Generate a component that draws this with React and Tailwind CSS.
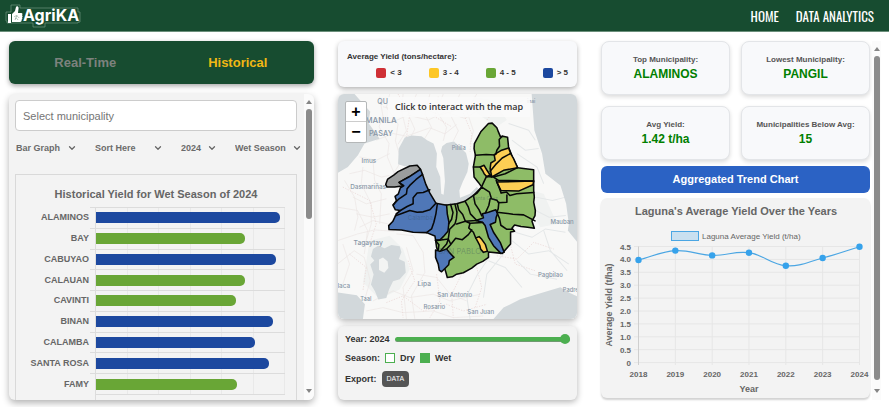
import React from "react";
import { ChevronDown } from "lucide-react";

const bars = [
  { name: "ALAMINOS", value: 97.6, high: true },
  { name: "BAY", value: 78.6, high: false },
  { name: "CABUYAO", value: 95, high: true },
  { name: "CALAUAN", value: 78.8, high: false },
  { name: "CAVINTI", value: 74.1, high: false },
  { name: "BINAN", value: 93.7, high: true },
  { name: "CALAMBA", value: 84.1, high: true },
  { name: "SANTA ROSA", value: 91.5, high: true },
  { name: "FAMY", value: 74.6, high: false },
];

const trend = [
  { year: 2018, y: 260 },
  { year: 2019, y: 250.6 },
  { year: 2020, y: 255.4 },
  { year: 2021, y: 252.7 },
  { year: 2022, y: 265.7 },
  { year: 2023, y: 258 },
  { year: 2024, y: 246.7 },
];
const yTicks = ["4.5", "4.0", "3.5", "3.0", "2.5", "2.0", "1.5", "1.0", "0.5", "0"];
const trendX = (i) => 638.5 + i * 36.83;
const tickY = (i) => 246.5 + i * 12.9;

function Logo() {
  return (
    <a href="#home" aria-label="AgriKA home" className="flex items-center">
      <svg viewBox="0 0 78 24" className="h-6 w-[78px]">
        <path
          d="M2 8h4V1h9v3h58v4h2v10h-2v1H40v4H28v-4H2v-2H1V8h1z"
          fill="none"
          stroke="#6f9580"
          strokeWidth="0.7"
        />
        <path d="M3 10h3v9H3z" fill="#fff" />
        <path
          d="M7 10l3-3 1-4c.3-1.300 2.600-1 2.600 1L13 9h3.200c1.400 0 1.600 1.600.8 2.200.8.6.8 1.800 0 2.300.6.7.4 1.800-.4 2.200.4 1.200-.4 2.300-1.600 2.300H9L7 18z"
          fill="#fff"
        />
        <path d="M9 13c2-2 4-1 5 1M10 15c1-1 2-1 3 1M12 11l-2 5" stroke="#8fae9c" strokeWidth="0.7" fill="none" />
        <text x="18" y="17" fontFamily="Inter, sans-serif" fontSize="16" fontWeight="700" fill="#fff">
          AgriKA
        </text>
      </svg>
    </a>
  );
}

function Filter({ label, value, className }) {
  return (
    <div className={"relative flex h-4 shrink-0 items-center " + className}>
      <select
        aria-label={label}
        defaultValue={value}
        className="w-full appearance-none bg-transparent text-[9px] leading-4 font-bold text-[#6b6b6b] outline-none"
      >
        <option>{value}</option>
      </select>
      <ChevronDown className="pointer-events-none absolute right-0 size-[10px] text-[#666]" strokeWidth={3} />
    </div>
  );
}

function ScrollRail({ thumb, className }) {
  return (
    <div aria-hidden="true" className={"flex shrink-0 flex-col items-center bg-[#fbfbfb] " + className}>
      <svg viewBox="0 0 6 4" className="h-1 w-[6px]">
        <path d="M0 4 3 0l3 4z" fill="#858585" />
      </svg>
      <div className={"mt-[5px] w-[6px] rounded-full bg-[#8b8b8b] " + thumb} />
      <svg viewBox="0 0 6 4" className="mt-auto h-1 w-[6px]">
        <path d="M0 0l3 4 3-4z" fill="#858585" />
      </svg>
    </div>
  );
}

function HistoryPanel() {
  return (
    <section className="flex min-h-0 flex-1 overflow-hidden rounded-md bg-[#f3f3f3] shadow-[0_3px_7px_rgba(0,0,0,0.3)]">
      <div className="flex min-h-0 min-w-0 flex-1 flex-col pt-[6px] pl-[6px]">
        <input
          type="text"
          aria-label="Select municipality"
          placeholder="Select municipality"
          className="mr-[7px] h-[31px] shrink-0 rounded border border-[#ccc] bg-white px-[7px] text-[11px] text-[#555] outline-none placeholder:text-[#757575]"
        />
        <div className="mt-[9px] flex shrink-0 gap-[18px] pl-px">
          <Filter label="Chart type" value="Bar Graph" className="w-[61px]" />
          <Filter label="Sort" value="Sort Here" className="w-[68px]" />
          <Filter label="Year" value="2024" className="w-[36px]" />
          <Filter label="Season" value="Wet Season" className="w-[67px]" />
        </div>
        <div className="mt-[18px] mr-[7px] min-h-0 flex-1 overflow-hidden border border-b-0 border-[#d9d9d9] pr-[11px]">
          <h2 className="mt-[11px] pl-[11px] text-center text-[11px] leading-4 font-bold text-[#666]">
            Historical Yield for Wet Season of 2024
          </h2>
          <div className="mt-[5px] grid h-[187px] grid-cols-[74px_1fr] grid-rows-9">
            {bars.map((bar) => (
              <React.Fragment key={bar.name}>
                <div className="flex items-center justify-end pr-px text-[9px] leading-3 font-bold text-[#666]">
                  {bar.name}
                </div>
                <div className="flex">
                  <div className="w-[5px] border-t border-[#dcdcdc]" />
                  <div className="grid min-w-0 flex-1 grid-cols-6 border-t border-l border-[#dcdcdc]">
                    <div className="col-span-6 col-start-1 row-start-1 flex items-center">
                      <div
                        className={"z-10 h-[11px] rounded-r-[5px] " + (bar.high ? "bg-[#1c489f]" : "bg-[#69a636]")}
                        style={{ width: bar.value + "%" }}
                      />
                    </div>
                    {[1, 2, 3, 4, 5, 6].map((n) => (
                      <div key={n} className="row-start-1 border-r border-[#e9e9e9]" style={{ gridColumn: n }} />
                    ))}
                  </div>
                </div>
              </React.Fragment>
            ))}
          </div>
          <div className="ml-[79px] h-3 border-t border-l border-[#dcdcdc]" />
        </div>
      </div>
      <ScrollRail className="w-[10px] pt-[6px] pb-[7px]" thumb="h-[110px]" />
    </section>
  );
}

function Legend() {
  return (
    <section className="rounded-md bg-[#f8f9fb] px-[9px] pt-[10px] pb-[8px] text-[8px] leading-3 font-bold text-[#333] shadow-[0_2px_5px_rgba(0,0,0,0.3)]">
      <h2>Average Yield (tons/hectare):</h2>
      <ul className="mt-1 flex justify-end gap-[27px]">
        <li className="flex items-center gap-1"><span className="size-[10px] rounded-xs bg-[#cf3036]" />&lt; 3</li>
        <li className="flex items-center gap-1"><span className="size-[10px] rounded-xs bg-[#fdc726]" />3 - 4</li>
        <li className="flex items-center gap-1"><span className="size-[10px] rounded-xs bg-[#69a636]" />4 - 5</li>
        <li className="flex items-center gap-1"><span className="size-[10px] rounded-xs bg-[#1c489f]" />&gt; 5</li>
      </ul>
    </section>
  );
}

const places = [
  ["QU", 143, -167, 21],
  ["MANILA", 107, -111, 24],
  ["PASAY", 118, -74, 22],
  ["Imus", 96, 8, 19],
  ["Pililla", 365, -31, 17],
  ["Dasmariñas", 62, 85, 19],
  ["Tagaytay", 72, 253, 20],
  ["Lipa", 263, 375, 20],
  ["San Antonio", 322, 407, 18],
  ["Rosario", 281, 445, 18],
  ["San Juan", 412, 460, 18],
  ["Mauban", 660, 189, 18],
  ["Pagbilao", 623, 350, 18],
  ["Padre", 697, 392, 17],
  ["laca", 24, 380, 19],
  ["Taal", 92, 419, 17],
  ["inai", 590, -170, 15],
];

function YieldMap() {
  return (
    <section className="relative min-h-0 flex-1 overflow-hidden rounded-md bg-[#f6f6f5] shadow-[0_2px_6px_rgba(0,0,0,0.3)]">
      <svg viewBox="24 -198 717 672" preserveAspectRatio="xMidYMid slice" className="size-full" role="img" aria-label="Map of yield by municipality in Laguna">
        <rect x="-400" y="-600" width="1600" height="1500" fill="#f8f8f7" />
        <g fill="#f0f2f1">
          <path d="M120 240l60-15 40 40 20 60-30 60-60 30-50-50z" />
          <path d="M430-190l60 10 40 60-30 20-60-40zM560 80l80 20 40 90-50 10-40-70z" />
        </g>
        <g fill="none" stroke="#ebe5e4" strokeWidth="2">
          <path d="M150-190l10 60-12 30 30 50-5 40 25 60M180-198l-10 40 35 50-8 50 18 60-25 40M220-198l-5 50 15 60-25 40M260-198l-25 60 20 45-15 30M300-198l-15 60 20 40-25 40M140-60l50-20 40 8 70-25 45 18 35-28" />
          <path d="M140-125l50 10 45-20 60 15 50-25 60 20 40-25M160-160l60 15 60-10 50 20 50-15M340-198l-20 50 30 50-10 40M390-198l-30 60 25 50-15 30M440-198l-30 50 20 60-10 40" />
          <path d="M90-10l50 10 40-20M60 40l45-10 50 20 25-5M45 60l30 50 10 60-10 40M100 20l-5 50 30 60 0 60-15 50M130 0l5 60 20 40-5 90M70 110l40 20 60-15M80 160l50 10 50-10M90 200l40-20 45 10M24 240l60-20 50-12 60 4" />
          <path d="M24 140l60 10 30 60-10 70M24 310l50-40 30 20 18 70-15 50M40 250l20 60-20 60M200 220l50 5 30 50 5 60-40 70 10 68M230 260l20 70-30 50 10 94M130 420l60-30 50 20 70-10 50 20 90-20M110 450l50-10 60 15 90-5 60 20 90-5M260 340l60 10 40 50 50 20" />
        </g>
        <g fill="none" stroke="#e9d3d2" strokeWidth="2" strokeDasharray="4 4">
          <path d="M205-198l35 60-10 70 50 25M325-190l-10 60 50 30M430-180l-30 40 25 60-5 55M470-120l40-50 50 10M40 80l80 40 20 70-20 60M60 280l50 40-10 70M235 300l20 60-40 60 5 50M320 340l10 80-30 50M395 340l-30 60 5 70M440 320l15 60-20 60M500 285l60 10 50-50 60 20M540 250l15 60 60 20" />
          <path d="M170 425l50-20 60 45 70-20 50 20 70-20" />
        </g>
        <g fill="none" stroke="#e4e7e8" strokeWidth="3">
          <path d="M510-180l30 20 40-20M535-110l60 20 20 30M545-60l40 30 40-5M560-20l60 40 20 50M616 110l50 10 40-10M616 150l40 20 50-5M555 215l50 15 40-25 60 10M545 240l50 40 60-10 60 40M480 285l-40 60-30 60 10 69M520 280l-50 60-10 70M475 300l50 20 50 60M560 300l40 40 80 15M640 210l20 60 50 60" />
        </g>
        <g fill="#d2d8db">
          <path d="M-400-600H60L75-198 100-170 122-145 116-112 150-64 105-50 85-15 55 20 24 38-400 60z" />
          <path d="M225-68L245-74 275-72 293-59 311-50 321-20 319 20 331 50 334 100 341 103 345 63 340-7 333-27 337-42 350-52 372-56 390-40 408-22 416 10 412 35 398 65 388 90 390 112 420 100 440 80 450 90 420 130 380 145 318 140 300 105 280 50 268 18 225 18 205 12 207-35z" />
          <path d="M605-600L604-198 612-90 635-20 645 40 690 75 707 130 715 190 712 210 741 245H1200V-600z" />
          <path d="M480 900L490 474 520 440 570 415 630 397 690 379 715 395 741 407H1200V900z" />
          <path d="M-400 395H24L82 403 106 430 100 474V900H-400z" />
          <path d="M130 265l15-10 20 8 20-10 25 4 5 18-8 20 18 8 3 32-18 20-20 6-12 25-8 25-24 5-10-25-12-20 8-30-10-30 12-12-10-12z" />
        </g>
        <path d="M148 296l12-6 14 12 2 20-12 14-16-8z" fill="#f3f4f3" />
        <g fontFamily="Inter, 'Noto Sans', sans-serif" fontWeight="500" fill="#8796a6">
          {places.map(([name, x, y, size]) => (
            <text key={name} x={x} y={y} fontSize={size}>{name}</text>
          ))}
        </g>

        <g stroke="#080808" strokeWidth="4.600" strokeLinejoin="round" strokeLinecap="round">
          <path
            fill="#8ebc67"
            d="M475-110L486-111 500-97 505-84 511-70 518-72 532-69 535-40 548-5 562 22 610 28V90L612 110 610 125 615 150 614 165 605 182 612 203 592 200 572 198 553 193 545 203 553 212 541 214V250L516 278 475 274V290L458 302 440 310 425 322 400 336 380 340 367 348 352 350 348 335 340 310 320 260 317 238 330 200 345 134 380 130 405 122 430 105 455 80 445 66 432 50 430 20 436-15 432-35 433-50 452-85z"
          />
          <path fill="#9b9d9d" d="M168 72L174 56 192 44 205 34 240 17 262 15 272 27 237 50 208 66 212 70 222 76 195 80 172 80z" />
          <path
            fill="#4f77b7"
            d="M272 27L278 42 288 72 300 98 318 128 350 134 352 160 357 185 354 212 340 228 330 238 317 238 315 226 290 216 250 215 215 208 178 207 177 195 189 183 200 160 212 150 197 148 190 135 200 120 196 108 206 100 212 82 222 76 208 66 237 50z"
          />
          <path fill="#fdce54" d="M492-17L512-29 535-37 541-21 550-5 562 22 520 30 485 50 480 25 482 8 495 0z" />
          <path fill="#fdce54" d="M450 20L462 15 470 29 480 44 470 49 462 40 458 32z" />
          <path fill="#fdce54" d="M500 65L610 62 608 73 565 92 512 90z" />
          <path fill="#4f77b7" d="M457 160L475 155 497 148 502 160 498 170 496 185 480 192 490 215 510 245 522 275 512 278 490 255 475 230 465 195 457 185 437 180 460 172z" />
          <path fill="#fdce54" d="M437 232L447 228 455 236 466 252 472 272 460 275 452 266 449 254z" />
          <path fill="#4f77b7" d="M317 268L330 272 350 265 358 275 372 290 358 300 356 312 348 320 335 333 328 328 325 310 317 290z" />
          <g fill="none">
            <path d="M278 42L258 58 240 75 232 85 230 100 208 115 190 133M300 88L280 96 262 98 250 112V130L232 138 212 150 200 160M318 128L300 148 280 154 262 155 240 150 218 158 197 166M322 132L318 160 312 185 305 205 290 216" />
            <path d="M436-15L468-17 494-16M516-72L507-62 508-42 500-30 497-18M430 20H450M485 50L469 48 455 78M480 33L496 13 516-7 542-21M490 50L525 40 562 22M490 50L505 60 610 62M485 50L478 42M498 60L506 80 513 98 529 95 539 105 559 100 610 96" />
            <path d="M530 104V125L505 127 500 119 484 115 478 95 455 80M506 125L504 145 500 155 526 158 548 161 580 163 614 181M480 115L476 135 466 157M455 80L441 98 430 105 435 130 447 148 455 166M405 122L415 140 421 160 440 180M382 130L386 148 398 162 406 182 437 180M375 131L381 155 379 175 375 190 359 206 355 235 317 240M362 132L369 156 365 176 356 190" />
            <path d="M406 182L420 188 416 202 430 215 437 232M420 188L458 186M380 190L406 182M425 208L415 222 397 237 377 233 361 253 350 265M355 235L350 250 332 270M317 240L327 252 325 268M355 235L362 250M502 160L508 174 512 194 530 206 547 206" />
          </g>
        </g>
        <g fontFamily="Inter, 'Noto Sans', sans-serif" fill="#334b57" fillOpacity="0.35">
          <text x="234" y="177" fontSize="18">Calamba</text>
          <text x="325" y="281" fontSize="23">SAN PABLO</text>
          <text x="425" y="120" fontSize="15">Santa Cruz</text>
        </g>
      </svg>
      <p className="absolute top-[3px] left-[50px] bg-[#fafafa]/85 px-[7px] text-center font-['Open_Sans',sans-serif] text-[9px] leading-5 font-semibold whitespace-nowrap text-[#333]">
        Click to interact with the map
      </p>
      <div className="absolute top-[7px] left-[7px] flex flex-col divide-y divide-[#ccc] overflow-hidden rounded-xs border border-[#b4b7b8] bg-white text-[16px] leading-none font-bold text-black">
        <button type="button" aria-label="Zoom in" className="size-5">+</button>
        <button type="button" aria-label="Zoom out" className="size-5">−</button>
      </div>
    </section>
  );
}

function Controls() {
  return (
    <section className="rounded-md bg-[#f3f3f3] px-[7px] pt-[6px] pb-[13px] text-[9px] leading-[14px] font-bold text-[#333] shadow-[0_2px_6px_rgba(0,0,0,0.3)]">
      <div className="flex items-center gap-[5px]">
        <label htmlFor="year">Year: 2024</label>
        <input
          id="year"
          type="range"
          min="2018"
          max="2024"
          defaultValue="2024"
          className="h-[5px] min-w-0 flex-1 appearance-none rounded-full border-b border-[#6f9a70] bg-[#4caf50] [&::-webkit-slider-thumb]:size-[10px] [&::-webkit-slider-thumb]:appearance-none [&::-webkit-slider-thumb]:rounded-full [&::-webkit-slider-thumb]:bg-[#4caf50]"
        />
      </div>
      <fieldset className="mt-[5px] flex items-center">
        <legend className="float-left mr-[5px]">Season:</legend>
        <label className="mr-[5px] flex items-center gap-[5px]">
          <input type="checkbox" className="size-[10px] appearance-none border border-[#4caf50] bg-white checked:bg-[#4caf50]" />
          Dry
        </label>
        <label className="flex items-center gap-[5px]">
          <input type="checkbox" defaultChecked className="size-[10px] appearance-none border border-[#4caf50] bg-white checked:bg-[#4caf50]" />
          Wet
        </label>
      </fieldset>
      <div className="mt-[6px] flex items-center gap-[5px]">
        <span>Export:</span>
        <button type="button" className="h-4 rounded bg-[#555] px-[5px] text-[7px] leading-4 font-normal text-white">DATA</button>
      </div>
    </section>
  );
}

function Stat({ label, value }) {
  return (
    <div className="flex h-[54px] flex-col items-center justify-center rounded-lg border border-[#e3e5e8] bg-[#f8f9fb] pb-px font-bold shadow-[0_2px_4px_rgba(0,0,0,0.14)]">
      <p className="text-[8px] leading-[13px] whitespace-nowrap text-[#555]">{label}</p>
      <p className="text-[12px] leading-4 text-[#008000]">{value}</p>
    </div>
  );
}

function TrendChart() {
  return (
    <section className="rounded-md bg-[#f3f3f3] shadow-[0_2px_2px_rgba(0,0,0,0.18)]">
      <svg viewBox="601 198 269 200" className="block w-full" role="img" aria-label="Laguna's average yield over the years" fontFamily="'Liberation Sans', Arial, sans-serif" fill="#666">
        <text x="736" y="215" fontSize="11" fontWeight="700" textAnchor="middle">Laguna's Average Yield Over the Years</text>
        <rect x="671.5" y="231.500" width="27" height="9" fill="#c9e0f0" stroke="#4ba6e3" />
        <text x="702" y="239" fontSize="8">Laguna Average Yield (t/ha)</text>
        {yTicks.map((t, i) => (
          <g key={t}>
            <line x1="634" x2="859.500" y1={tickY(i)} y2={tickY(i)} stroke="#e6e6e6" strokeWidth="1" />
            <text x="631" y={tickY(i) + 3} fontSize="8" fontWeight="700" textAnchor="end">{t}</text>
          </g>
        ))}
        {trend.map((p, i) => (
          <g key={p.year}>
            <line x1={trendX(i)} x2={trendX(i)} y1="246.500" y2="365" stroke={i === 0 ? "#cfcfcf" : "#e6e6e6"} />
            <text x={trendX(i)} y="377" fontSize="8" fontWeight="700" textAnchor="middle">{p.year}</text>
          </g>
        ))}
        <path
          d="M638.500 260C653 256.200 661 251.500 675.300 250.600C690 249.700 697.500 255 712.200 255.400C727 255.800 735 250.600 749 252.700C764 255 771 264.600 785.800 265.700C800.500 266.800 808 261.800 822.700 258C837.500 254.200 845 251.200 859.500 246.700"
          fill="none"
          stroke="#4ba6e3"
          strokeWidth="1.200"
        />
        {trend.map((p, i) => (
          <circle key={p.year} cx={trendX(i)} cy={p.y} r="3.200" fill="#36a2eb" />
        ))}
        <text x="749" y="392" fontSize="9" fontWeight="700" textAnchor="middle">Year</text>
        <text transform="translate(612 305) rotate(-90)" fontSize="9" fontWeight="700" textAnchor="middle">Average Yield (t/ha)</text>
      </svg>
    </section>
  );
}

export default function App() {
  return (
    <div className="flex h-screen flex-col overflow-hidden bg-white font-['Liberation_Sans',Arial,sans-serif]">
      <header className="flex h-8 shrink-0 items-center justify-between border-b border-[#6b8f7b] bg-[#174c30] pr-[15px] pl-[5px]">
        <Logo />
        <nav className="flex gap-[17px] font-['Oswald','Liberation_Sans_Narrow','Open_Sans_Condensed','Roboto_Condensed',Roboto,sans-serif] text-[13px] leading-5 text-white">
          <a href="#home">HOME</a>
          <a href="#analytics">DATA ANALYTICS</a>
        </nav>
      </header>
      <main className="grid min-h-0 flex-1 grid-cols-[305fr_239fr_280fr] gap-6 pt-[9px] pr-2 pb-[7px] pl-[9px]">
        <div className="flex min-h-0 min-w-0 flex-col gap-[10px]">
          <div className="grid h-[43px] shrink-0 grid-cols-2 rounded-md bg-[#174c30] text-[13px] font-bold shadow-[0_2px_5px_rgba(0,0,0,0.35)]">
            <button type="button" className="text-[#7d827e]">Real-Time</button>
            <button type="button" className="text-[#f1b814]">Historical</button>
          </div>
          <HistoryPanel />
        </div>
        <div className="flex min-h-0 min-w-0 flex-col gap-[7px]">
          <Legend />
          <YieldMap />
          <Controls />
        </div>
        <div className="flex min-h-0 min-w-0 gap-[2px]">
          <div className="flex min-w-0 flex-1 flex-col">
            <div className="grid grid-cols-2 gap-[11px]">
              <Stat label="Top Municipality:" value="ALAMINOS" />
              <Stat label="Lowest Municipality:" value="PANGIL" />
              <Stat label="Avg Yield:" value="1.42 t/ha" />
              <Stat label="Municipalities Below Avg:" value="15" />
            </div>
            <button type="button" className="mt-[6px] mb-[5px] h-[27px] shrink-0 rounded-md bg-[#2b62c4] text-[11px] font-bold text-white">
              Aggregated Trend Chart
            </button>
            <TrendChart />
          </div>
          <ScrollRail className="w-[9px] pt-[6px] pb-[7px]" thumb="h-[324px]" />
        </div>
      </main>
    </div>
  );
}
